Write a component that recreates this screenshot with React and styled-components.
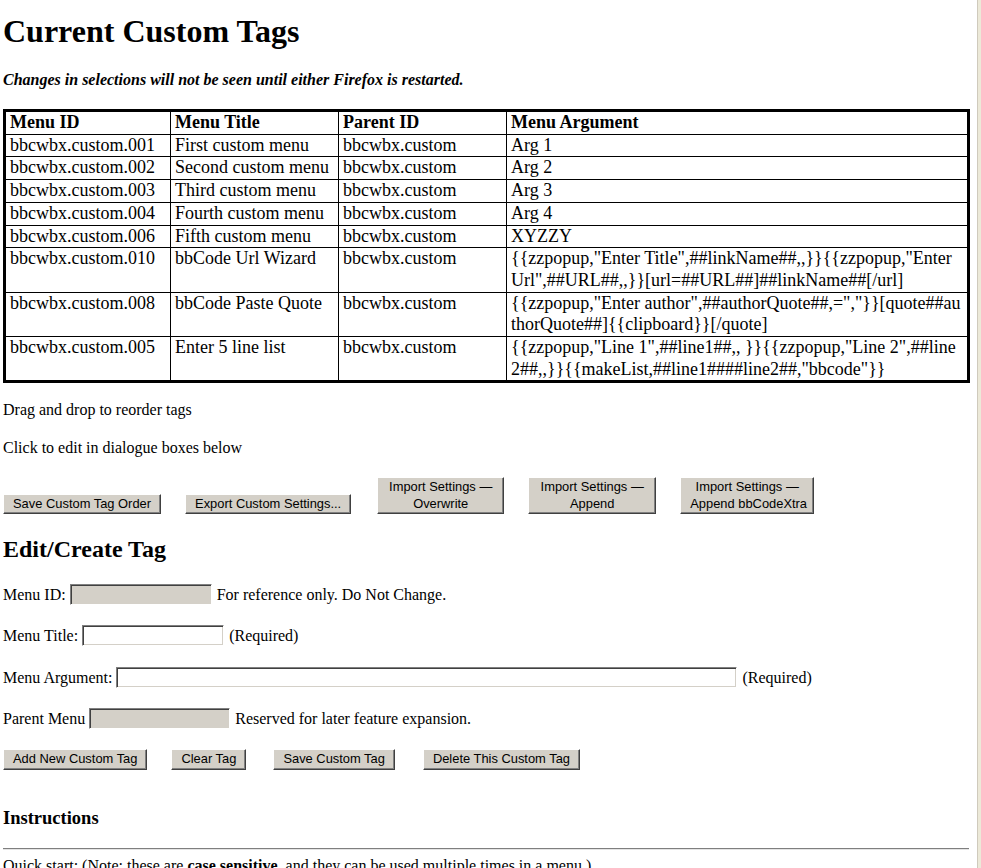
import React from 'react';
import styled, { createGlobalStyle } from 'styled-components';

const Global = createGlobalStyle`
  *, *::before, *::after { box-sizing: border-box; }
  html, body { margin: 0; padding: 0; background: #fff; overflow: hidden; }
  body {
    font-family: "Liberation Serif", "Times New Roman", serif;
    font-size: 16px;
    color: #000;
  }
`;

const Page = styled.div`
  width: 972px;
  padding: 0 0 0 3px;
`;

const ScrollEdge = styled.div`
  position: fixed;
  top: 0;
  right: 0;
  width: 4px;
  height: 100%;
  background: #ece9d8;
  border-left: 1px solid #cfcabd;
`;

const Title = styled.h1`
  font-size: 32px;
  line-height: 37px;
  font-weight: bold;
  margin: 13px 0 0;
`;

const Notice = styled.p`
  font-size: 16px;
  line-height: 18px;
  font-weight: bold;
  font-style: italic;
  margin: 21px 0 0;
`;

const Table = styled.table`
  width: 967px;
  table-layout: fixed;
  border-collapse: separate;
  border-spacing: 0;
  border: 3px solid #000;
  margin-top: 20px;
  font-size: 18px;
  line-height: 21.7px;
`;

const Cell = styled.td`
  width: ${(p) => p.$w || 'auto'};
  padding: 0 4px;
  vertical-align: top;
  text-align: left;
  white-space: nowrap;
  border-right: 1px solid #000;
  border-bottom: 1px solid #000;
  font-weight: ${(p) => (p.$head ? 'bold' : 'normal')};
  &:last-child { border-right: none; }
  tbody tr:last-child > & { border-bottom: none; }
`;

const Para = styled.p`
  font-size: 16px;
  line-height: 18px;
  margin: ${(p) => p.$mt}px 0 0;
`;

const ButtonRow = styled.div`
  display: flex;
  align-items: flex-end;
  gap: 24px;
  margin-top: ${(p) => p.$mt}px;
`;

const Button = styled.button`
  font-family: "Liberation Sans", Arial, sans-serif;
  font-size: 12.9px;
  line-height: 16.5px;
  color: #000;
  background: #d4d0c8;
  padding: 1px 9px;
  margin: 0 0 0 ${(p) => p.$ml || 0}px;
  width: ${(p) => (p.$w ? `${p.$w}px` : 'auto')};
  text-align: center;
  white-space: nowrap;
  border: 1px solid;
  border-color: #ffffff #404040 #404040 #ffffff;
  box-shadow: inset -1px -1px 0 #808080;
  border-radius: 0;
  cursor: default;
`;

const SubTitle = styled.h2`
  font-size: 24px;
  line-height: 28px;
  font-weight: bold;
  margin: 21px 0 0;
`;

const FormRow = styled.div`
  display: flex;
  align-items: center;
  gap: 4px;
  height: 21px;
  margin-top: ${(p) => p.$mt}px;
  font-size: 16px;
  line-height: 18px;
  white-space: nowrap;
`;

const Field = styled.input`
  width: ${(p) => p.$w}px;
  height: 21px;
  padding: 1px 3px;
  font-family: "Liberation Sans", Arial, sans-serif;
  font-size: 13px;
  background: ${(p) => (p.disabled ? '#d4d0c8' : '#fff')};
  border: 1px solid;
  border-color: #808080 #ffffff #ffffff #808080;
  box-shadow: inset 1px 1px 0 #404040, inset -1px -1px 0 #d4d0c8;
  margin: 0 1px 0 0;
  outline: none;
`;

const Heading3 = styled.h3`
  font-size: 18.5px;
  line-height: 21px;
  font-weight: bold;
  margin: 38px 0 0;
`;

const Rule = styled.hr`
  width: 966px;
  height: 2px;
  margin: 19px 0 0;
  border: 0;
  border-top: 1px solid #7f7f7f;
  border-bottom: 1px solid #e4e4e4;
`;

const rows = [
  { id: 'bbcwbx.custom.001', title: 'First custom menu', arg: ['Arg 1'] },
  { id: 'bbcwbx.custom.002', title: 'Second custom menu', arg: ['Arg 2'] },
  { id: 'bbcwbx.custom.003', title: 'Third custom menu', arg: ['Arg 3'] },
  { id: 'bbcwbx.custom.004', title: 'Fourth custom menu', arg: ['Arg 4'] },
  { id: 'bbcwbx.custom.006', title: 'Fifth custom menu', arg: ['XYZZY'] },
  {
    id: 'bbcwbx.custom.010',
    title: 'bbCode Url Wizard',
    arg: ['{{zzpopup,"Enter Title",##linkName##,,}}{{zzpopup,"Enter', 'Url",##URL##,,}}[url=##URL##]##linkName##[/url]'],
  },
  {
    id: 'bbcwbx.custom.008',
    title: 'bbCode Paste Quote',
    arg: ['{{zzpopup,"Enter author",##authorQuote##,=","}}[quote##au', 'thorQuote##]{{clipboard}}[/quote]'],
  },
  {
    id: 'bbcwbx.custom.005',
    title: 'Enter 5 line list',
    arg: ['{{zzpopup,"Line 1",##line1##,, }}{{zzpopup,"Line 2",##line', '2##,,}}{{makeList,##line1####line2##,"bbcode"}}'],
  },
];

export default function App() {
  return (
    <Page>
      <Global />
      <ScrollEdge />
      <Title>Current Custom Tags</Title>
      <Notice>Changes in selections will not be seen until either Firefox is restarted.</Notice>
      <Table>
        <thead>
          <tr>
            <Cell as="th" $head $w="165px">Menu ID</Cell>
            <Cell as="th" $head $w="168px">Menu Title</Cell>
            <Cell as="th" $head $w="168px">Parent ID</Cell>
            <Cell as="th" $head>Menu Argument</Cell>
          </tr>
        </thead>
        <tbody>
          {rows.map((r) => (
            <tr key={r.id}>
              <Cell>{r.id}</Cell>
              <Cell>{r.title}</Cell>
              <Cell>bbcwbx.custom</Cell>
              <Cell>
                {r.arg.map((line, i) => (
                  <React.Fragment key={i}>
                    {i > 0 && <br />}
                    {line}
                  </React.Fragment>
                ))}
              </Cell>
            </tr>
          ))}
        </tbody>
      </Table>
      <Para $mt={18}>Drag and drop to reorder tags</Para>
      <Para $mt={20}>Click to edit in dialogue boxes below</Para>
      <ButtonRow $mt={20}>
        <Button>Save Custom Tag Order</Button>
        <Button>Export Custom Settings...</Button>
        <Button $w={127} $ml={2}>Import Settings —<br />Overwrite</Button>
        <Button $w={128}>Import Settings —<br />Append</Button>
        <Button $w={134}>Import Settings —<br />Append bbCodeXtra</Button>
      </ButtonRow>
      <SubTitle>Edit/Create Tag</SubTitle>
      <FormRow $mt={21}>
        <span>Menu ID:</span>
        <Field $w={142} disabled />
        <span>For reference only. Do Not Change.</span>
      </FormRow>
      <FormRow $mt={20}>
        <span>Menu Title:</span>
        <Field $w={142} />
        <span>(Required)</span>
      </FormRow>
      <FormRow $mt={21}>
        <span>Menu Argument:</span>
        <Field $w={621} />
        <span>(Required)</span>
      </FormRow>
      <FormRow $mt={20}>
        <span>Parent Menu</span>
        <Field $w={141} disabled />
        <span>Reserved for later feature expansion.</span>
      </FormRow>
      <ButtonRow $mt={20}>
        <Button>Add New Custom Tag</Button>
        <Button>Clear Tag</Button>
        <Button $ml={3}>Save Custom Tag</Button>
        <Button $ml={4}>Delete This Custom Tag</Button>
      </ButtonRow>
      <Heading3>Instructions</Heading3>
      <Rule />
      <Para $mt={7}>
        Quick start: (Note: these are <b>case sensitive</b>, and they can be used multiple times in a menu.)
      </Para>
    </Page>
  );
}
